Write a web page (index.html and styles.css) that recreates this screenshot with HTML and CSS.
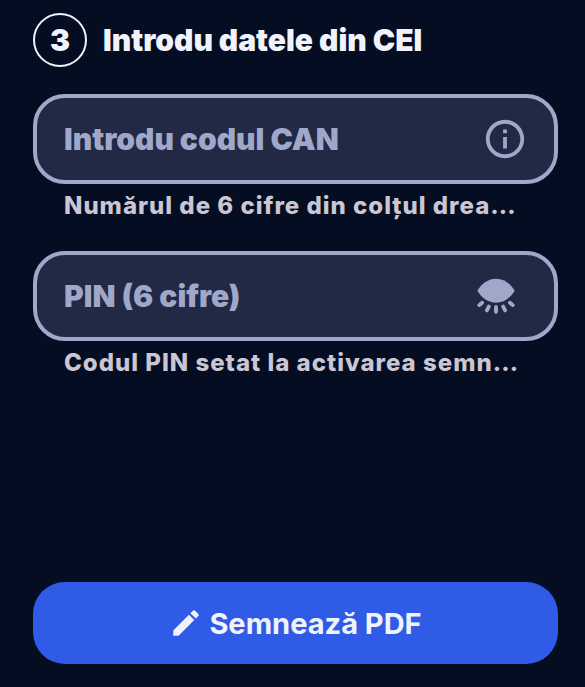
FILE: index.html
```html
<!DOCTYPE html>
<html lang="ro">
<head>
  <meta charset="UTF-8">
  <title>Semnează PDF</title>
  <meta name="viewport" content="width=device-width, initial-scale=1.0">
  <link rel="stylesheet" href="styles.css">
</head>
<body>
  <form class="sign-form">
    <!-- Step title -->
    <div class="step">
      <span class="step-number">3</span>
      <h1 class="step-title">Introdu datele din CEI</h1>
    </div>

    <!-- CAN code -->
    <div class="field-group">
      <div class="field">
        <label for="can">Introdu codul CAN</label>
        <input type="text" id="can" inputmode="numeric" maxlength="6" aria-describedby="can-help">
        <button type="button" class="icon-button">
          <svg width="46" height="46" viewBox="0 0 24 24" fill="currentColor" aria-hidden="true">
            <path d="M11 7h2v2h-2zm0 4h2v6h-2zm1-9C6.480 2 2 6.480 2 12s4.480 10 10 10 10-4.480 10-10S17.520 2 12 2zm0 18c-4.410 0-8-3.590-8-8s3.590-8 8-8 8 3.590 8 8-3.590 8-8 8z"/>
          </svg>
        </button>
      </div>
      <p class="help" id="can-help">Numărul de 6 cifre din colțul drea…</p>
    </div>

    <!-- PIN -->
    <div class="field-group">
      <div class="field">
        <label for="pin">PIN (6 cifre)</label>
        <input type="password" id="pin" inputmode="numeric" maxlength="6" aria-describedby="pin-help">
        <button type="button" class="icon-button icon-eye">
          <svg width="46" height="46" viewBox="0 0 48 48" aria-hidden="true">
            <path fill="currentColor" d="M4.500 18.500C9 11 16 6 24 6S39 11 43.500 18.500C39 26 32 31 24 31S9 26 4.500 18.500z"/>
            <path fill="none" stroke="currentColor" stroke-width="4" stroke-linecap="round" d="M6.500 33.500l3-2.500M14.500 39l2-4M24 40.500v-5M33.500 39L31.500 35M41.500 33.500l-3-2.500"/>
          </svg>
        </button>
      </div>
      <p class="help" id="pin-help">Codul PIN setat la activarea semn…</p>
    </div>

    <button type="submit" class="submit-button">
      <svg width="34" height="34" viewBox="0 0 24 24" fill="currentColor" aria-hidden="true">
        <path d="M3 17.250V21h3.750L17.810 9.940l-3.750-3.750L3 17.250zM20.710 7.040c.39-.39.39-1.020 0-1.410l-2.340-2.340c-.39-.39-1.020-.39-1.410 0l-1.830 1.830 3.750 3.750 1.830-1.830z"/>
      </svg>
      <span>Semnează PDF</span>
    </button>
  </form>
</body>
</html>
```
FILE: styles.css
```css
:root {
  --background: #040d21;
  --field-bg: #212945;
  --outline: #a0a8ca;
  --text: #f1f3fc;
  --help: #cbc6d3;
  --primary: #2f5be7;
}

* {
  box-sizing: border-box;
}

body {
  margin: 0;
  background: var(--background);
  color: var(--text);
  font-family: Inter, "Noto Sans", sans-serif;
}

.sign-form {
  display: flex;
  flex-direction: column;
  min-height: 100vh;
  padding: 13px 27px 23px 33px;
}

/* Step title */
.step {
  display: flex;
  align-items: center;
  gap: 16px;
  margin-bottom: 27px;
}

.step-number {
  display: flex;
  align-items: center;
  justify-content: center;
  width: 54px;
  height: 54px;
  border: 2px solid var(--text);
  border-radius: 50%;
  font-size: 30px;
  font-weight: 900;
}

.step-title {
  margin: 0;
  font-size: 30px;
  font-weight: 900;
}

/* Fields */
.field-group {
  margin-bottom: 30px;
}

.field {
  display: flex;
  align-items: center;
  height: 90px;
  padding: 0 26px 0 27px;
  border: 4px solid var(--outline);
  border-radius: 32px;
  background: var(--field-bg);
  color: var(--outline);
}

.field label {
  font-size: 30px;
  font-weight: 900;
  white-space: nowrap;
}

.field input {
  flex: 1;
  min-width: 0;
  padding: 0 12px;
  border: none;
  outline: none;
  background: transparent;
  color: var(--text);
  font: inherit;
  font-size: 30px;
}

.icon-button {
  display: flex;
  padding: 0;
  border: none;
  background: none;
  color: inherit;
  cursor: pointer;
}

.icon-eye {
  margin-right: 9px;
}

.help {
  margin: 7px 31px 0;
  font-size: 24px;
  line-height: 30px;
  font-weight: 800;
  letter-spacing: 1px;
  color: var(--help);
  white-space: nowrap;
  overflow: hidden;
}

/* Submit */
.submit-button {
  display: flex;
  align-items: center;
  justify-content: center;
  gap: 6px;
  height: 82px;
  margin-top: auto;
  border: none;
  border-radius: 32px;
  background: var(--primary);
  color: var(--text);
  font-family: inherit;
  font-size: 29px;
  font-weight: 700;
  cursor: pointer;
}
```
